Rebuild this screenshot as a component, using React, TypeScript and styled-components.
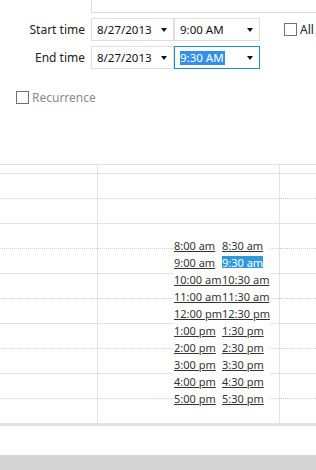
import styled, { createGlobalStyle } from 'styled-components'

const GlobalStyle = createGlobalStyle`
  html, body {
    margin: 0;
    padding: 0;
    background: #fff;
  }
  body {
    font-family: 'Noto Sans', 'Open Sans', sans-serif;
    font-size: 11px;
    color: #222;
  }
`

const Page = styled.div`
  width: 316px;
  height: 470px;
  overflow: hidden;
  display: flex;
  flex-direction: column;
`

const Form = styled.div`
  height: 164px;
  display: flex;
  flex-direction: column;
  font-size: 11.5px;
`

const NotesBox = styled.div`
  margin-left: 91px;
  height: 12px;
  border-left: 1px solid #dcdcdc;
  border-bottom: 1px solid #dcdcdc;
`

const Fields = styled.div`
  margin-top: 5px;
  display: grid;
  grid-template-columns: 91px 83px 86px auto;
  row-gap: 5px;
  align-items: center;
`

const Label = styled.div`
  text-align: right;
  padding-right: 6px;
  line-height: 23px;
  font-size: 12px;
`

const Combo = styled.div<{ $focused?: boolean }>`
  height: 21px;
  border: 1px solid ${({ $focused }) => ($focused ? '#1c8ad8' : '#dedede')};
  display: flex;
  align-items: center;
  justify-content: space-between;
  padding: 0 5px;
  color: #111;
`

const Selected = styled.span`
  background: #3390e8;
  color: #fff;
  line-height: 14px;
  padding-right: 1px;
`

const Arrow = styled.span`
  width: 0;
  height: 0;
  border-left: 3.5px solid transparent;
  border-right: 3.5px solid transparent;
  border-top: 4px solid #111;
  margin-right: 1px;
`

const CheckRow = styled.label<{ $muted?: boolean }>`
  display: flex;
  align-items: center;
  gap: 3px;
  font-size: 12px;
  color: ${({ $muted }) => ($muted ? '#8a8a8a' : '#222')};
`

const Box = styled.span`
  width: 11px;
  height: 11px;
  border: 1px solid #707070;
  background: #fff;
`

const AllDay = styled(CheckRow)`
  margin-left: 24px;
`

const Recurrence = styled(CheckRow)`
  margin: 20px 0 0 16px;
`

const Calendar = styled.div`
  position: relative;
  border-top: 1px solid #e2e2e2;
  border-bottom: 2px solid #e2e2e2;
`

const Row = styled.div<{ $header?: boolean }>`
  display: grid;
  grid-template-columns: 98px 182px 1fr;
  height: ${({ $header }) => ($header ? '8px' : '49px')};
  border-bottom: 1px solid #e2e2e2;
  &:last-of-type {
    border-bottom: none;
  }
`

const Cell = styled.div`
  border-right: 1px solid #e2e2e2;
  &:last-child {
    border-right: none;
  }
`

const HalfHour = styled.div`
  height: 24px;
  border-bottom: 1px dotted #cfcfcf;
`

const Spacer = styled.div`
  flex: 1;
`

const StatusBar = styled.div`
  height: 15px;
  background: #d4d4d4;
`

const TimeList = styled.div`
  position: absolute;
  left: 173px;
  top: 72px;
  width: 96px;
  padding: 0 0 3px 1px;
  background: #fff;
  display: grid;
  grid-template-columns: 48px 48px;
  grid-auto-rows: 17px;
  align-items: center;
`

const TimeLink = styled.a<{ $active?: boolean }>`
  justify-self: start;
  white-space: nowrap;
  color: ${({ $active }) => ($active ? '#fff' : '#333')};
  background: ${({ $active }) => ($active ? '#2e9ad8' : 'transparent')};
  text-decoration: underline;
  line-height: 13px;
`

const hours = [
  ['8:00 am', '8:30 am'],
  ['9:00 am', '9:30 am'],
  ['10:00 am', '10:30 am'],
  ['11:00 am', '11:30 am'],
  ['12:00 pm', '12:30 pm'],
  ['1:00 pm', '1:30 pm'],
  ['2:00 pm', '2:30 pm'],
  ['3:00 pm', '3:30 pm'],
  ['4:00 pm', '4:30 pm'],
  ['5:00 pm', '5:30 pm'],
]

export default function App() {
  return (
    <Page>
      <GlobalStyle />
      <Form>
        <NotesBox />
        <Fields>
          <Label>Start time</Label>
          <Combo>
            <span>8/27/2013</span>
            <Arrow />
          </Combo>
          <Combo>
            <span>9:00 AM</span>
            <Arrow />
          </Combo>
          <AllDay>
            <Box />
            All
          </AllDay>
          <Label>End time</Label>
          <Combo>
            <span>8/27/2013</span>
            <Arrow />
          </Combo>
          <Combo $focused>
            <Selected>9:30 AM</Selected>
            <Arrow />
          </Combo>
        </Fields>
        <Recurrence $muted>
          <Box />
          Recurrence
        </Recurrence>
      </Form>
      <Calendar>
        <Row $header>
          <Cell />
          <Cell />
          <Cell />
        </Row>
        {[0, 1, 2, 3, 4].map((i) => (
          <Row key={i}>
            <Cell>
              <HalfHour />
            </Cell>
            <Cell>
              <HalfHour />
            </Cell>
            <Cell>
              <HalfHour />
            </Cell>
          </Row>
        ))}
        <TimeList>
          {hours.map(([a, b]) => [
            <TimeLink key={a} href="#">{a}</TimeLink>,
            <TimeLink key={b} href="#" $active={b === '9:30 am'}>{b}</TimeLink>,
          ])}
        </TimeList>
      </Calendar>
      <Spacer />
      <StatusBar />
    </Page>
  )
}
